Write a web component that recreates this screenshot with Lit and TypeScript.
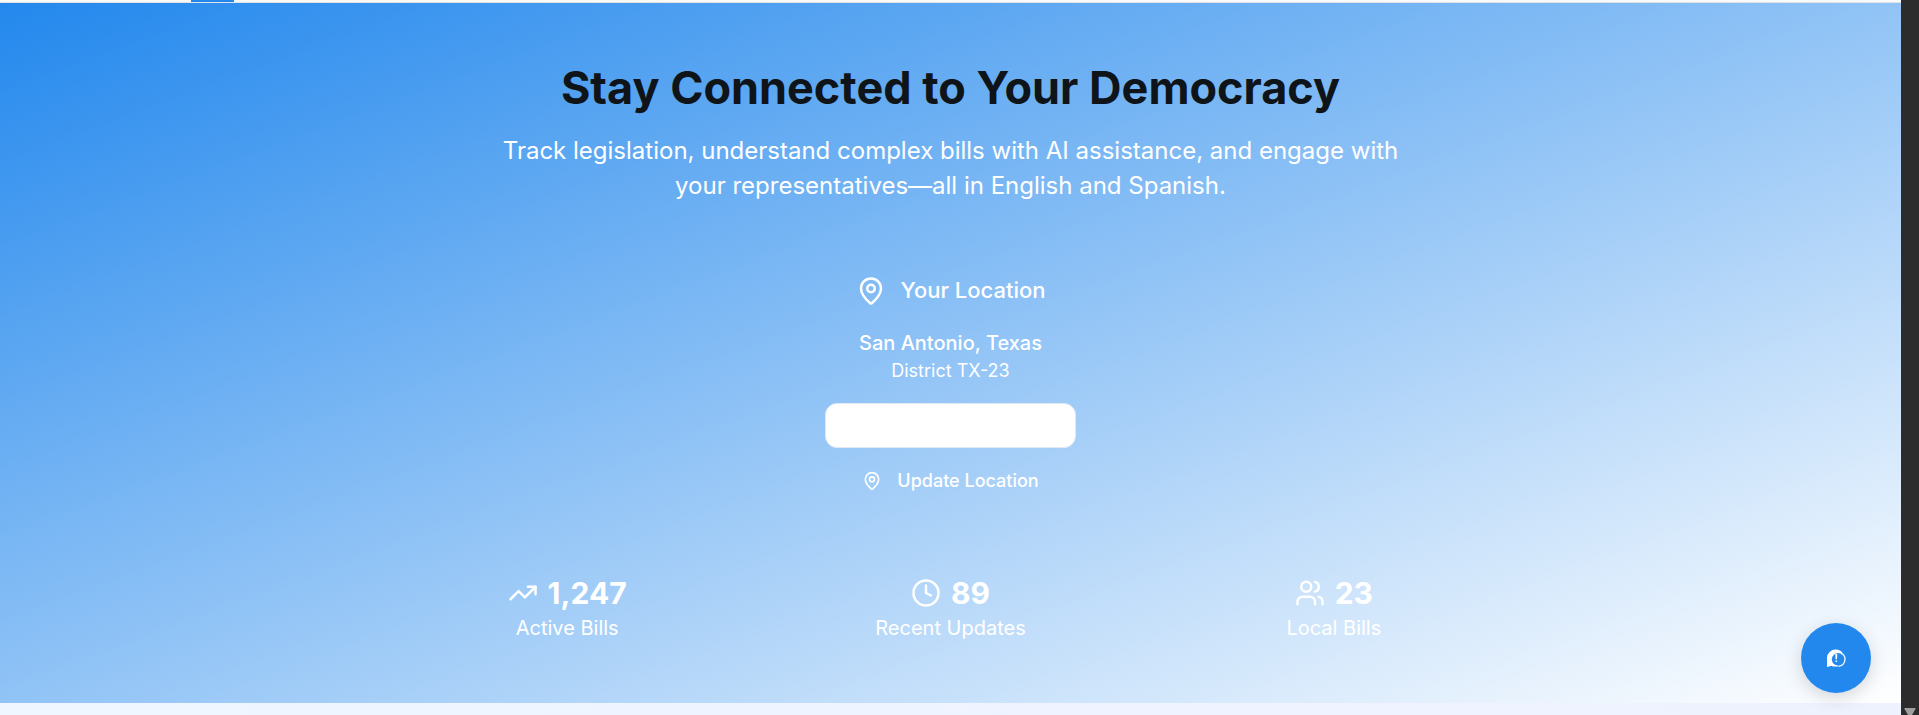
import { LitElement, html, css, svg } from "lit";
import { customElement } from "lit/decorators.js";

const pin = svg`<path d="M20 10c0 4.993-5.539 10.193-7.399 11.799a1 1 0 0 1-1.202 0C9.539 20.193 4 14.993 4 10a8 8 0 0 1 16 0"/><circle cx="12" cy="10" r="3"/>`;
const trend = svg`<polyline points="22 7 13.5 15.5 8.5 10.5 2 17"/><polyline points="16 7 22 7 22 13"/>`;
const clock = svg`<circle cx="12" cy="12" r="10"/><polyline points="12 6 12 12 16 14"/>`;
const users = svg`<path d="M16 21v-2a4 4 0 0 0-4-4H6a4 4 0 0 0-4 4v2"/><circle cx="9" cy="7" r="4"/><path d="M22 21v-2a4 4 0 0 0-3-3.87"/><path d="M16 3.13a4 4 0 0 1 0 7.75"/>`;

const stats = [
  { icon: trend, value: "1,247", label: "Active Bills" },
  { icon: clock, value: "89", label: "Recent Updates" },
  { icon: users, value: "23", label: "Local Bills" },
];

@customElement("app-root")
export class AppRoot extends LitElement {
  static styles = css`
    :host {
      display: flex;
      height: 100vh;
      overflow: hidden;
      font-family: Inter, "Liberation Sans", sans-serif;
      color: #fff;
    }
    * { box-sizing: border-box; }
    h1, h2, p { margin: 0; }
    button { font: inherit; color: inherit; cursor: pointer; }
    .page { flex: 1; min-width: 0; display: flex; flex-direction: column; }
    .nav {
      height: 3px;
      flex: none;
      padding-left: 191px;
      background: #fafafa;
      border-bottom: 1px solid #dfe3e8;
    }
    .tab { width: 43px; height: 2px; background: #2388ed; }
    .hero {
      flex: none;
      padding: 60px 20px;
      display: flex;
      flex-direction: column;
      align-items: center;
      text-align: center;
      background: linear-gradient(to bottom right, #2388ed, #fff);
    }
    .title { font-size: 45px; line-height: 50px; font-weight: 700; color: #0f1419; }
    .lead { max-width: 920px; margin-top: 20px; font-size: 24px; line-height: 35px; }
    .location {
      margin: 40px 0;
      padding: 30px;
      display: flex;
      flex-direction: column;
      align-items: center;
    }
    .heading {
      display: flex;
      align-items: center;
      gap: 15px;
      font-size: 22px;
      line-height: 35px;
      font-weight: 500;
    }
    .city { margin-top: 20px; font-size: 20px; line-height: 30px; font-weight: 500; }
    .district { font-size: 18px; line-height: 25px; }
    .field {
      margin-top: 20px;
      width: 251px;
      height: 45px;
      border: 1px solid #e1eaf4;
      border-radius: 12px;
      background: #fff;
    }
    .update {
      margin-top: 10px;
      height: 45px;
      padding: 0 15px;
      display: flex;
      align-items: center;
      gap: 15px;
      border: 0;
      background: none;
      font-size: 18px;
      font-weight: 500;
    }
    .stats {
      width: 100%;
      max-width: 1120px;
      display: grid;
      grid-template-columns: repeat(3, 1fr);
      gap: 30px;
    }
    .value {
      display: flex;
      align-items: center;
      justify-content: center;
      gap: 10px;
      font-size: 30px;
      line-height: 40px;
      font-weight: 700;
    }
    .label { font-size: 20px; line-height: 30px; }
    .icon {
      width: 30px;
      height: 30px;
      fill: none;
      stroke: currentColor;
      stroke-width: 2;
      stroke-linecap: round;
      stroke-linejoin: round;
    }
    .small { width: 20px; height: 20px; }
    .next { flex: 1; background: linear-gradient(to right, #eff6ff, #eef2ff); }
    .chat {
      position: fixed;
      right: 48px;
      bottom: 22px;
      width: 70px;
      height: 70px;
      padding: 0;
      display: grid;
      place-items: center;
      border: 0;
      border-radius: 50%;
      background: #2388ed;
      box-shadow: 0 5px 18px rgba(0, 0, 0, 0.15);
    }
    .bubble { width: 20px; height: 20px; }
    .scroll {
      flex: none;
      width: 18px;
      display: flex;
      align-items: flex-end;
      justify-content: center;
      background: #2c2c2c;
    }
    .arrow { display: block; width: 12px; height: 8px; fill: #9f9f9f; }
  `;

  icon(shape: unknown, size = "") {
    return html`<svg class="icon ${size}" viewBox="0 0 24 24" aria-hidden="true">${shape}</svg>`;
  }

  render() {
    return html`
      <div class="page">
        <div class="nav"><div class="tab"></div></div>
        <main class="hero">
          <h1 class="title">Stay Connected to Your Democracy</h1>
          <p class="lead">
            Track legislation, understand complex bills with AI assistance, and engage with your
            representatives—all in English and Spanish.
          </p>
          <section class="location">
            <h2 class="heading">${this.icon(pin)}Your Location</h2>
            <p class="city">San Antonio, Texas</p>
            <p class="district">District TX-23</p>
            <button class="field" aria-label="View district"></button>
            <button class="update">${this.icon(pin, "small")}Update Location</button>
          </section>
          <section class="stats">
            ${stats.map(
              (s) => html`<div>
                <div class="value">${this.icon(s.icon)}${s.value}</div>
                <div class="label">${s.label}</div>
              </div>`
            )}
          </section>
        </main>
        <div class="next"></div>
      </div>
      <div class="scroll">
        <svg class="arrow" viewBox="0 0 12 8"><path d="M1 1h10q1 0 .5 1L8 8H4L.5 2Q0 1 1 1z" /></svg>
      </div>
      <button class="chat" aria-label="Open chat">
        <svg class="bubble" viewBox="0 0 20 20">
          <path fill="#fff" d="M1 19V9.800A8.800 8.300 0 0 1 9.800 1.500C13 1.500 15.500 3 16.500 5L12 18.500H7L5.500 17.800Z" />
          <circle cx="12" cy="11.300" r="6.200" fill="#2388ed" />
          <path fill="none" stroke="#fff" stroke-width="1.300" d="M15.500 5.300A7 7 0 0 1 12.500 18.300" />
          <path fill="#fff" d="M9.300 5.800h2l-.3 5.500H9.600zM9.500 12.500h1.600v1.500H9.500z" />
        </svg>
      </button>
    `;
  }
}
